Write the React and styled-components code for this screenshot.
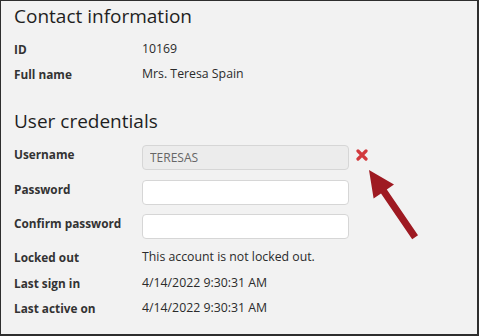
import React from "react";
import styled, { createGlobalStyle } from "styled-components";

const GlobalStyle = createGlobalStyle`
  html, body {
    margin: 0;
    padding: 0;
    background: #f2f2f2;
  }
  body {
    font-family: "Open Sans", "Liberation Sans", sans-serif;
    color: #2b2b2b;
  }
`;

const contact = [
  { label: "ID", value: "10169" },
  { label: "Full name", value: "Mrs. Teresa Spain" },
];

const credentials = [
  { label: "Username", value: "TERESAS", disabled: true, error: true },
  { label: "Password", value: "" },
  { label: "Confirm password", value: "" },
];

const status = [
  { label: "Locked out", value: "This account is not locked out." },
  { label: "Last sign in", value: "4/14/2022 9:30:31 AM" },
  { label: "Last active on", value: "4/14/2022 9:30:31 AM" },
];

function ErrorMark() {
  return (
    <svg width="12" height="12" viewBox="0 0 12 12">
      <path
        d="M2 2 L10 10 M10 2 L2 10"
        stroke="#d2393d"
        strokeWidth="3.2"
        strokeLinecap="round"
      />
    </svg>
  );
}

function Arrow() {
  return (
    <StyledArrow width="479" height="336" viewBox="0 0 479 336">
      <polygon
        points="369,170 394,184.4 386.8,189.6 418,235.2 412.2,239.2 381,193.6 373.6,198.6"
        fill="#9e1a22"
      />
    </StyledArrow>
  );
}

export default function App() {
  return (
    <>
      <GlobalStyle />
      <StyledFrame>
        <StyledHeading>Contact information</StyledHeading>
        <StyledGroup>
          {contact.map((row) => (
            <StyledRow key={row.label}>
              <StyledLabel>{row.label}</StyledLabel>
              <StyledValue>{row.value}</StyledValue>
            </StyledRow>
          ))}
        </StyledGroup>

        <StyledHeading second>User credentials</StyledHeading>
        <StyledFields>
          {credentials.map((row) => (
            <StyledFieldRow key={row.label}>
              <StyledLabel top>{row.label}</StyledLabel>
              <StyledInput
                type="text"
                defaultValue={row.value}
                disabled={row.disabled}
              />
              {row.error && (
                <StyledMark>
                  <ErrorMark />
                </StyledMark>
              )}
            </StyledFieldRow>
          ))}
        </StyledFields>

        <StyledStatus>
          {status.map((row) => (
            <StyledRow key={row.label} tall>
              <StyledLabel>{row.label}</StyledLabel>
              <StyledValue>{row.value}</StyledValue>
            </StyledRow>
          ))}
        </StyledStatus>
        <Arrow />
      </StyledFrame>
    </>
  );
}

const StyledFrame = styled.div`
  position: relative;
  width: 479px;
  height: 336px;
  box-sizing: border-box;
  background: #f2f2f2;
  border-style: solid;
  border-color: #2e2e2e;
  border-width: 1px 2px 2px 1px;
  padding: 3px 0 0 13px;
  overflow: hidden;
`;

const StyledHeading = styled.h2`
  margin: ${({ second }) => (second ? "22.5px" : "0")} 0 0 0;
  font-size: 19px;
  line-height: 24px;
  font-weight: 500;
  color: #1f1f1f;
`;

const StyledGroup = styled.div`
  margin-top: 8.5px;
`;

const StyledRow = styled.div`
  display: grid;
  grid-template-columns: 128px 1fr;
  align-items: center;
  height: ${({ tall }) => (tall ? "25.5px" : "25px")};
`;

const StyledLabel = styled.div`
  font-size: 11.8px;
  font-weight: 700;
  color: #333;
  align-self: ${({ top }) => (top ? "start" : "center")};
  line-height: 18px;
`;

const StyledValue = styled.div`
  font-size: 12.3px;
  color: #2b2b2b;
  line-height: 18px;
`;

const StyledFields = styled.div`
  margin-top: 12px;
  display: flex;
  flex-direction: column;
  gap: 9.5px;
`;

const StyledFieldRow = styled.div`
  display: grid;
  grid-template-columns: 128px 207px 20px;
  align-items: center;
  height: 25px;
`;

const StyledInput = styled.input`
  box-sizing: border-box;
  width: 207px;
  height: 25px;
  margin: 0;
  padding: 0 7px;
  border: 1px solid #d6d6d6;
  border-radius: 4px;
  background: #fff;
  font-family: "Open Sans", "Liberation Sans", sans-serif;
  font-size: 12px;
  color: #666;
  outline: none;

  &:disabled {
    background: #ececec;
    color: #666;
  }
`;

const StyledMark = styled.span`
  display: flex;
  align-items: center;
  padding-left: 7px;
  margin-top: -6px;
`;

const StyledStatus = styled.div`
  margin-top: 5.5px;
`;

const StyledArrow = styled.svg`
  position: absolute;
  left: -1px;
  top: -1px;
  pointer-events: none;
`;
